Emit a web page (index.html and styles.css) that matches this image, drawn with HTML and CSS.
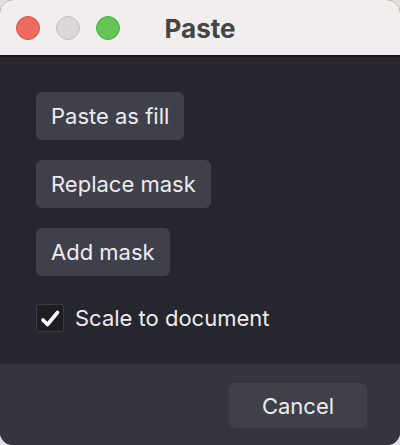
FILE: index.html
```html
<!DOCTYPE html>
<html lang="en">
  <head>
    <meta charset="UTF-8" />
    <meta name="viewport" content="width=device-width, initial-scale=1.0" />
    <title>Paste</title>
    <link rel="stylesheet" href="styles.css">
  </head>
  <body>
    <div class="window">
      <div class="titlebar">
        <div class="lights">
          <span class="light red"></span>
          <span class="light gray"></span>
          <span class="light green"></span>
        </div>
        <div class="title">Paste</div>
        <div></div>
      </div>
      <div class="content">
        <button class="btn">Paste as fill</button>
        <button class="btn">Replace mask</button>
        <button class="btn">Add mask</button>
        <label class="check">
          <span class="box">
            <svg width="26" height="26" viewBox="1 1 26 26">
              <path d="M7 16 L11.5 20.5 L21.5 8.5" fill="none" stroke="#fff" stroke-width="3.6" stroke-linecap="round" stroke-linejoin="round" />
            </svg>
          </span>
          Scale to document
        </label>
      </div>
      <div class="footer">
        <button class="btn cancel">Cancel</button>
      </div>
    </div>
  </body>
</html>
```

FILE: styles.css
```css
html {
  background-color: #dde1e6;
}
body {
  margin: 0;
  font-family: "Inter", "Noto Sans", sans-serif;
}
.window {
  width: 400px;
  height: 445px;
  border-radius: 13px;
  overflow: hidden;
  display: flex;
  flex-direction: column;
  background-color: #26262e;
}
.titlebar {
  height: 55px;
  background-color: #f3eeee;
  border-bottom: 2px solid #16161b;
  display: grid;
  grid-template-columns: 1fr auto 1fr;
  align-items: center;
}
.lights {
  display: flex;
  gap: 16px;
  padding-left: 16px;
}
.light {
  width: 24px;
  height: 24px;
  border-radius: 50%;
  box-sizing: border-box;
}
.red {
  background-color: #ee6a5f;
  border: 1px solid #d6574d;
}
.gray {
  background-color: #dcd7d7;
  border: 1px solid #c2bdbd;
}
.green {
  background-color: #61c454;
  border: 1px solid #4fae44;
}
.title {
  font-size: 26px;
  font-weight: 700;
  color: #454545;
  padding-top: 1px;
}
.content {
  flex: 1;
  padding: 35px 36px 0;
  display: flex;
  flex-direction: column;
  align-items: flex-start;
  gap: 20px;
}
.btn {
  height: 48px;
  padding: 0 15px;
  border: none;
  border-radius: 6px;
  background-color: #40404a;
  color: #ececf0;
  font-family: "Inter", "Noto Sans", sans-serif;
  font-size: 22px;
  cursor: pointer;
}
.check {
  margin-top: 8px;
  display: flex;
  align-items: center;
  gap: 11px;
  color: #ececf0;
  font-size: 22px;
}
.box {
  width: 28px;
  height: 28px;
  box-sizing: border-box;
  border: 1px solid #3b3b43;
  background-color: #1d1d22;
  border-radius: 2px;
  display: flex;
}
.footer {
  height: 81px;
  background-color: #35353d;
  display: flex;
  justify-content: flex-end;
  padding: 19px 33px 0 0;
  box-sizing: border-box;
}
.cancel {
  width: 138px;
  height: 45px;
}
```
